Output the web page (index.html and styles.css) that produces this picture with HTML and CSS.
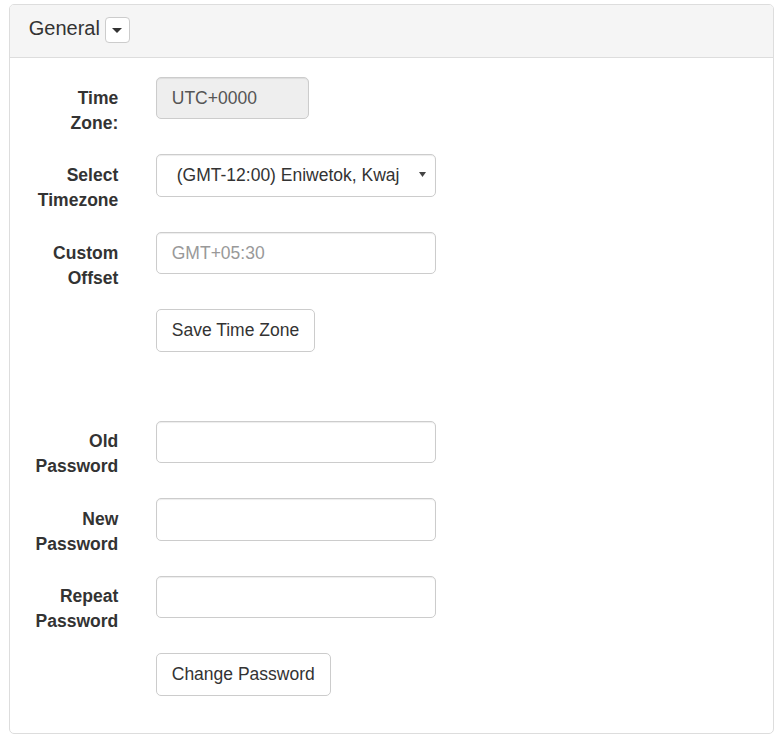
FILE: index.html
```html
<!DOCTYPE html>
<html>
<head>
<meta charset="utf-8">
<link rel="stylesheet" href="styles.css">
</head>
<body>
<div class="page">
  <div class="panel">
    <div class="panel-heading">
      <span class="panel-title">General</span>
      <button class="caret-btn" type="button"><span class="caret"></span></button>
    </div>
    <div class="panel-body">
      <form class="form">
        <div class="form-group">
          <label class="control-label">Time Zone:</label>
          <div class="control-col">
            <input class="form-control readonly" type="text" value="UTC+0000" readonly>
          </div>
        </div>
        <div class="form-group">
          <label class="control-label">Select Timezone</label>
          <div class="control-col">
            <div class="select-wrap">
              <select class="form-control select">
                <option>(GMT-12:00) Eniwetok, Kwajalein</option>
              </select>
              <svg class="select-arrow" width="7" height="5" viewBox="0 0 7 5"><path d="M0 0 L7 0 L3.5 5 Z" fill="#444"/></svg>
            </div>
          </div>
        </div>
        <div class="form-group">
          <label class="control-label">Custom Offset</label>
          <div class="control-col">
            <input class="form-control" type="text" placeholder="GMT+05:30">
          </div>
        </div>
        <div class="form-group">
          <div class="control-label"></div>
          <div class="control-col">
            <button class="btn" type="button">Save Time Zone</button>
          </div>
        </div>
      </form>
      <div class="spacer"></div>
      <form class="form">
        <div class="form-group">
          <label class="control-label">Old Password</label>
          <div class="control-col">
            <input class="form-control" type="password">
          </div>
        </div>
        <div class="form-group">
          <label class="control-label">New Password</label>
          <div class="control-col">
            <input class="form-control" type="password">
          </div>
        </div>
        <div class="form-group">
          <label class="control-label">Repeat Password</label>
          <div class="control-col">
            <input class="form-control" type="password">
          </div>
        </div>
        <div class="form-group">
          <div class="control-label"></div>
          <div class="control-col">
            <button class="btn" type="button">Change Password</button>
          </div>
        </div>
      </form>
    </div>
  </div>
</div>
</body>
</html>
```
FILE: styles.css
```css
* { box-sizing: border-box; }
html, body { margin: 0; padding: 0; background: #fff; }
body {
  font-family: "Liberation Sans", Arial, Helvetica, sans-serif;
  font-size: 17.5px;
  line-height: 25px;
  color: #333;
}
.page { padding: 4px 6px 0 9px; }
.panel {
  border: 1px solid #ddd;
  border-radius: 5px;
  background: #fff;
}
.panel-heading {
  background: #f5f5f5;
  border-bottom: 1px solid #ddd;
  border-radius: 4px 4px 0 0;
  padding: 12px 18.75px;
  display: flex;
  align-items: flex-start;
  height: 53px;
}
.panel-title {
  font-size: 20px;
  line-height: 22px;
  color: #333;
}
.caret-btn {
  margin-left: 5px;
  width: 25px;
  height: 26px;
  border: 1px solid #ccc;
  border-radius: 4px;
  background: #fff;
  padding: 0;
  display: flex;
  align-items: center;
  justify-content: center;
}
.caret {
  display: block;
  width: 0;
  height: 0;
  border-top: 5px solid #333;
  border-left: 5px solid transparent;
  border-right: 5px solid transparent;
  margin-top: 1px;
}
.panel-body { padding: 18.75px 0 18.75px; }
.form { margin: 0; }
.form-group {
  display: flex;
  margin-bottom: 18.75px;
}
.control-label {
  width: 127px;
  flex: none;
  padding: 8.75px 18.75px 0;
  text-align: right;
  font-weight: bold;
}
.control-col {
  width: 317.5px;
  flex: none;
  padding: 0 18.75px;
}
.form-control {
  display: block;
  width: 100%;
  height: 42.5px;
  padding: 7.5px 15px;
  font-family: inherit;
  font-size: 17.5px;
  line-height: 25px;
  color: #555;
  background: #fff;
  border: 1px solid #ccc;
  border-radius: 5px;
  box-shadow: inset 0 1px 1px rgba(0,0,0,.075);
  margin: 0;
  outline: none;
}
.form-control::placeholder { color: #999; }
.readonly {
  width: 153px;
  background: #eee;
}
.select-wrap { position: relative; }
.select {
  -webkit-appearance: none;
  appearance: none;
  padding-left: 20px;
  padding-right: 36px;
  color: #333;
  white-space: nowrap;
  overflow: hidden;
}
.select-arrow {
  position: absolute;
  right: 10px;
  top: 18px;
}
.btn {
  display: inline-block;
  height: 42.5px;
  padding: 7.5px 15px;
  font-family: inherit;
  font-size: 17.5px;
  line-height: 25px;
  color: #333;
  background: #fff;
  border: 1px solid #ccc;
  border-radius: 5px;
  margin: 0;
}
.spacer { height: 50px; }
```
